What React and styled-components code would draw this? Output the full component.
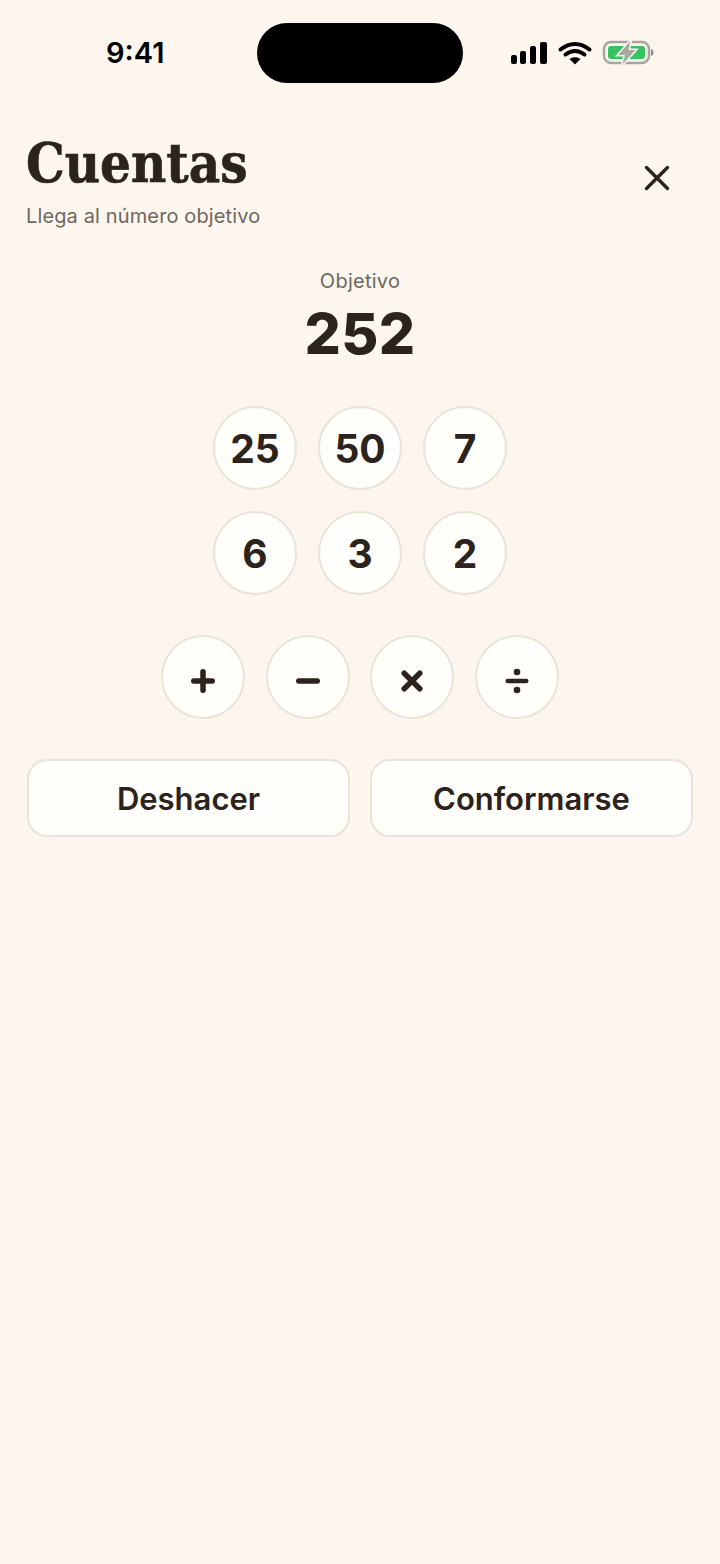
import React from "react";
import styled, { createGlobalStyle } from "styled-components";

const Global = createGlobalStyle`
  html, body { margin: 0; padding: 0; background: #fcf6ef; }
  * { box-sizing: border-box; }
`;

const Page = styled.div`
  width: 720px;
  height: 1564px;
  background: #fcf6ef;
  color: #2b231c;
  font-family: Inter, "Noto Sans", sans-serif;
  overflow: hidden;
`;

const StatusBar = styled.div`
  height: 131px;
  padding: 23px 0 0 106px;
  display: flex;
  align-items: flex-start;
`;

const Time = styled.div`
  width: 151px;
  height: 60px;
  line-height: 60px;
  font-size: 29px;
  font-weight: 600;
  color: #000;
`;

const Island = styled.div`
  width: 206px;
  height: 60px;
  border-radius: 30px;
  background: #000;
`;

const StatusIcons = styled.svg`
  display: block;
  width: 144px;
  height: 30px;
  margin: 17px 0 0 48px;
`;

const Header = styled.header`
  padding: 0 50px 0 26px;
  display: flex;
  justify-content: space-between;
  align-items: flex-start;
`;

const Title = styled.h1`
  margin: 0;
  font-family: "DejaVu Serif Condensed", "DejaVu Serif", serif;
  font-size: 54px;
  line-height: 64px;
  font-weight: 700;
  white-space: nowrap;
  -webkit-text-stroke: 0.6px #2b231c;
`;

const Subtitle = styled.p`
  margin: 9px 0 0;
  font-size: 20px;
  line-height: 24px;
  letter-spacing: 0.13px;
  color: #6f675e;
`;

const Close = styled.svg`
  display: block;
  width: 26px;
  height: 26px;
  margin-top: 34px;
`;

const Target = styled.section`
  margin-top: 41px;
  text-align: center;
`;

const TargetLabel = styled.div`
  font-size: 20px;
  line-height: 24px;
  letter-spacing: 0.25px;
  color: #6f675e;
`;

const TargetValue = styled.div`
  margin-top: 7px;
  font-size: 57px;
  line-height: 68px;
  font-weight: 800;
  letter-spacing: 0.3px;
`;

const Rows = styled.div`
  display: flex;
  flex-direction: column;
  gap: 21px;
  margin-top: ${(p) => p.$top}px;
`;

const Row = styled.div`
  display: flex;
  justify-content: center;
  gap: ${(p) => p.$gap}px;
`;

const Circle = styled.button`
  width: 84px;
  height: 84px;
  padding: 0;
  display: flex;
  align-items: center;
  justify-content: center;
  border-radius: 50%;
  border: 2px solid #e8e4da;
  background: #fffefb;
  color: #2b231c;
  font-family: inherit;
  font-size: 39px;
  font-weight: 700;
`;

const OpIcon = styled.svg`
  display: block;
  width: 30px;
  height: 30px;
  margin-top: 7px;
`;

const Actions = styled.div`
  display: flex;
  gap: 20px;
  margin-top: 40px;
  padding: 0 27px;
`;

const ActionButton = styled.button`
  flex: 1;
  height: 78px;
  border-radius: 20px;
  border: 2px solid #e8e4da;
  background: #fffefb;
  color: #2b231c;
  font-family: inherit;
  font-size: 31px;
  font-weight: 600;
`;

const ops = [
  { k: "+", d: <path d="M15 5.750v18.500M5.750 15h18.500" /> },
  { k: "-", d: <path d="M5.750 15h18.500" /> },
  { k: "x", d: <path d="M7.200 7.200l15.600 15.600M22.800 7.200L7.200 22.800" /> },
  {
    k: "/",
    d: (
      <>
        <path d="M5.750 15h18.500" strokeWidth="4.500" />
        <circle cx="15" cy="6" r="3.300" fill="#2b231c" stroke="none" />
        <circle cx="15" cy="24" r="3.300" fill="#2b231c" stroke="none" />
      </>
    ),
  },
];

export default function App() {
  return (
    <Page>
      <Global />
      <StatusBar>
        <Time>9:41</Time>
        <Island />
        <StatusIcons viewBox="0 0 144 30" fill="none">
          <rect x="0" y="15" width="6" height="9" rx="2" fill="#000" />
          <rect x="9" y="11" width="6" height="13" rx="2" fill="#000" />
          <rect x="19" y="6" width="6" height="18" rx="2" fill="#000" />
          <rect x="29" y="2" width="7" height="22" rx="2" fill="#000" />
          <path d="M49.500 9.500c9-7.500 20-7.500 29 0" stroke="#000" strokeWidth="4" strokeLinecap="round" />
          <path d="M54.500 14.500c6-4.500 13-4.500 19 0" stroke="#000" strokeWidth="4" strokeLinecap="round" />
          <path d="M64 24.500l-5.500-5.500c3.500-2.300 7.500-2.300 11 0z" fill="#000" />
          <rect x="93" y="2" width="45" height="21" rx="7" stroke="#a6a6a0" strokeWidth="2.500" />
          <rect x="97" y="6" width="37" height="13" rx="3" fill="#35c35f" />
          <path d="M140 9c2 .5 2.500 2 2.500 3.500s-.5 3-2.500 3.500z" fill="#8f8f8a" />
          <path
            d="M119.500 1l-12.500 14h7l-2.500 9.500 13-14.500h-7z"
            fill="#a9a9a4"
            stroke="#fcf6ef"
            strokeWidth="3"
            paintOrder="stroke"
          />
        </StatusIcons>
      </StatusBar>
      <Header>
        <div>
          <Title>Cuentas</Title>
          <Subtitle>Llega al número objetivo</Subtitle>
        </div>
        <Close viewBox="0 0 26 26" fill="none" stroke="#2b231c" strokeWidth="3.400" strokeLinecap="round">
          <path d="M2.500 2.500l21 21M23.500 2.500l-21 21" />
        </Close>
      </Header>
      <Target>
        <TargetLabel>Objetivo</TargetLabel>
        <TargetValue>252</TargetValue>
      </Target>
      <Rows $top={38}>
        <Row $gap={21}>
          {[25, 50, 7].map((n) => (
            <Circle key={n}>{n}</Circle>
          ))}
        </Row>
        <Row $gap={21}>
          {[6, 3, 2].map((n) => (
            <Circle key={n}>{n}</Circle>
          ))}
        </Row>
      </Rows>
      <Rows $top={40}>
        <Row $gap={20.67}>
          {ops.map((o) => (
            <Circle key={o.k} aria-label={o.k}>
              <OpIcon viewBox="0 0 30 30" fill="none" stroke="#2b231c" strokeWidth="5.500" strokeLinecap="round">
                {o.d}
              </OpIcon>
            </Circle>
          ))}
        </Row>
      </Rows>
      <Actions>
        <ActionButton>Deshacer</ActionButton>
        <ActionButton>Conformarse</ActionButton>
      </Actions>
    </Page>
  );
}
